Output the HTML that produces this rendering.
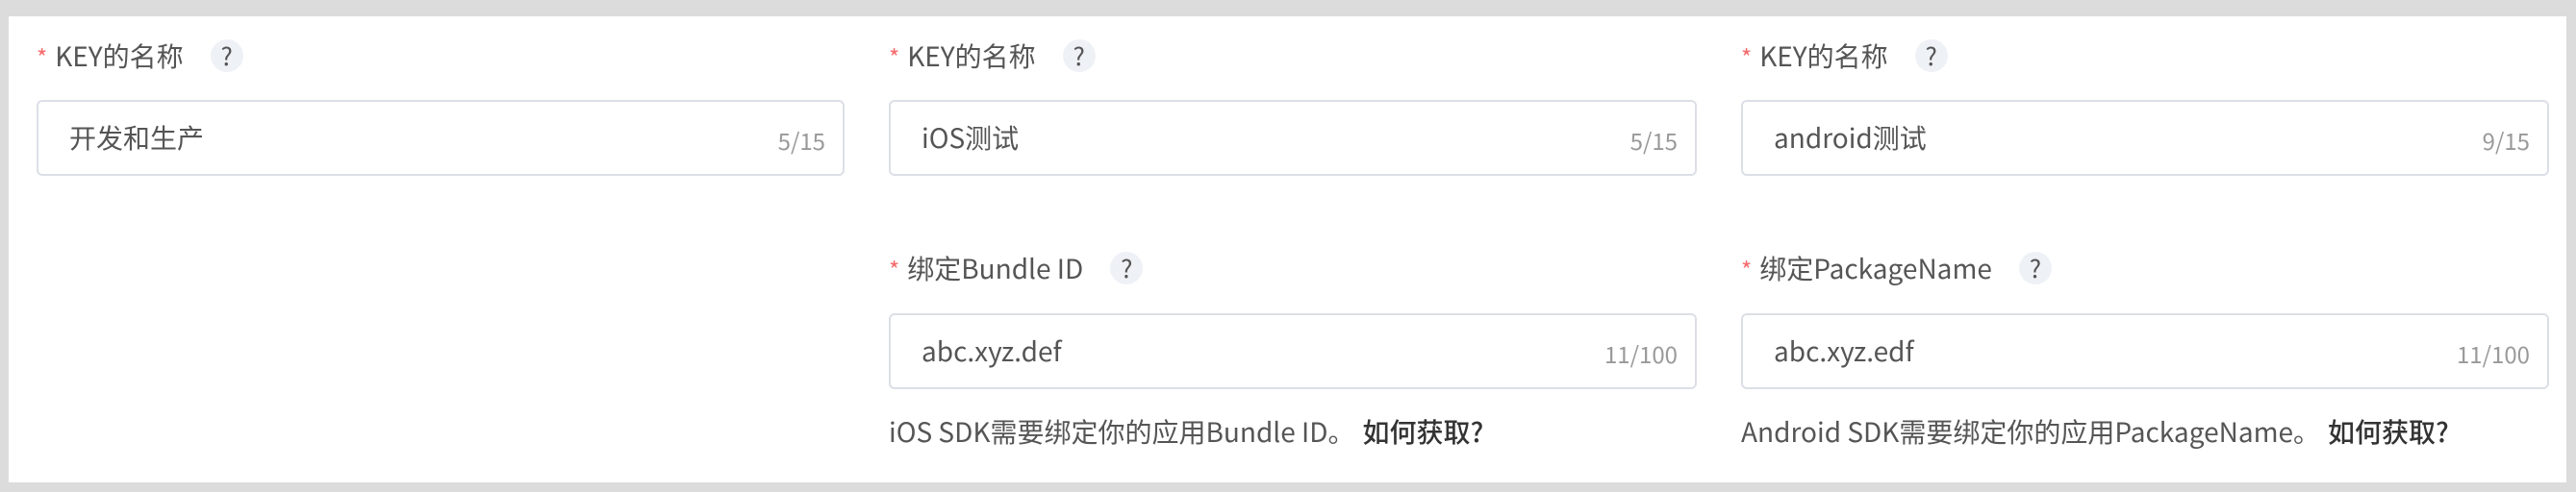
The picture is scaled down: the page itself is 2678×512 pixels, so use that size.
<!DOCTYPE html>
<html><head><meta charset="utf-8"><style>
html,body{margin:0;padding:0;}
body{width:2678px;height:512px;background:#dcdcdc;position:relative;overflow:hidden;font-family:"Noto Sans CJK SC","Liberation Sans",sans-serif;}
.panel{position:absolute;left:9px;top:17px;width:2659px;height:485px;background:#fff;}
.lbl{position:absolute;height:34px;line-height:34px;font-size:28px;color:#555;white-space:nowrap;}
.lbl .ast{color:#f56c6c;margin-right:8px;font-size:24px;}
.q{display:inline-block;width:34px;height:34px;border-radius:50%;background:#eef1f6;color:#555;text-align:center;line-height:34px;font-size:26px;margin-left:28px;vertical-align:top;}
.inp{position:absolute;width:840px;height:79px;border:2px solid #dcdfe6;border-radius:6px;box-sizing:border-box;}
.inp .v{position:absolute;left:32px;top:0;line-height:75px;font-size:28px;color:#555;}
.inp .c{position:absolute;right:18px;top:2px;line-height:75px;font-size:24px;color:#999;}
.help{position:absolute;font-size:28px;color:#555;line-height:34px;white-space:nowrap;}
.help b{color:#333;margin-left:8px;font-weight:500;}
</style></head><body>
<div class="panel"></div>

<div class="lbl" style="left:38px;top:41px"><span class="ast">*</span>KEY的名称<span class="q">?</span></div>
<div class="inp" style="left:38px;top:104px"><span class="v">开发和生产</span><span class="c">5/15</span></div>

<div class="lbl" style="left:924px;top:41px"><span class="ast">*</span>KEY的名称<span class="q">?</span></div>
<div class="inp" style="left:924px;top:104px"><span class="v">iOS测试</span><span class="c">5/15</span></div>

<div class="lbl" style="left:1810px;top:41px"><span class="ast">*</span>KEY的名称<span class="q">?</span></div>
<div class="inp" style="left:1810px;top:104px"><span class="v">android测试</span><span class="c">9/15</span></div>

<div class="lbl" style="left:924px;top:262px"><span class="ast">*</span>绑定Bundle ID<span class="q">?</span></div>
<div class="inp" style="left:924px;top:326px"><span class="v">abc.xyz.def</span><span class="c">11/100</span></div>
<div class="help" style="left:924px;top:432px">iOS SDK需要绑定你的应用Bundle ID。<b>如何获取?</b></div>

<div class="lbl" style="left:1810px;top:262px"><span class="ast">*</span>绑定PackageName<span class="q">?</span></div>
<div class="inp" style="left:1810px;top:326px"><span class="v">abc.xyz.edf</span><span class="c">11/100</span></div>
<div class="help" style="left:1810px;top:432px">Android SDK需要绑定你的应用PackageName。<b>如何获取?</b></div>
</body></html>
